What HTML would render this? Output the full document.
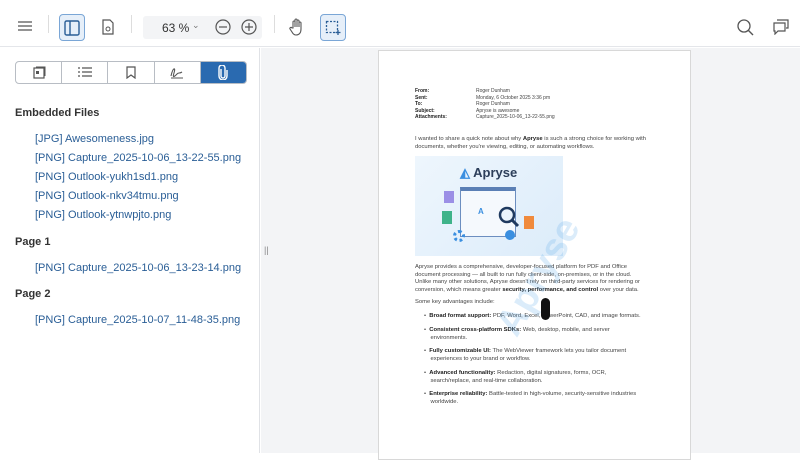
<!DOCTYPE html>
<html><head><style>
*{margin:0;padding:0;box-sizing:border-box}
body{width:800px;height:453px;overflow:hidden;background:#fff;font-family:"Liberation Sans",sans-serif;position:relative}
.tb{position:absolute;left:0;top:0;width:800px;height:47px;border-bottom:1px solid #e4e6ea;background:#fff}
.ic{position:absolute}
.side{position:absolute;left:0;top:48px;width:260px;height:405px;border-right:1px solid #e0e2e6;background:#fff}
.main{position:absolute;left:261px;top:48px;width:539px;height:405px;background:#f3f4f6}
.page{position:absolute;left:378px;top:50px;width:313px;height:410px;background:#fff;border:1px solid #d8d8d8}
.tabs{position:absolute;left:15px;top:61px;width:232px;height:23px;border:1px solid #b8bdc4;border-radius:4px;display:flex;overflow:hidden}
.tabs div{flex:1;border-right:1px solid #b8bdc4;display:flex;align-items:center;justify-content:center}
.tabs div:last-child{border:none;background:#2a6ab0}
h4{position:absolute;left:15px;font-size:11px;font-weight:bold;color:#333}
.lk{position:absolute;left:35px;font-size:11px;color:#2a5e96}
.p{position:absolute;font-size:5.85px;color:#444;line-height:6.6px;white-space:nowrap}
.q{line-height:7.6px}
b{color:#222}
</style></head><body>
<div class="tb">
 <svg class="ic" style="left:18px;top:21px" width="14" height="10"><path d="M0 1h14M0 5h14M0 9h14" stroke="#555" stroke-width="1.3"/></svg>
 <div class="ic" style="left:48px;top:15px;width:1px;height:18px;background:#ddd"></div>
 <div class="ic" style="left:59px;top:14px;width:26px;height:27px;border:1px solid #7aa6d6;border-radius:4px;background:#e6eff9"></div>
 <svg class="ic" style="left:64px;top:20px" width="16" height="16"><rect x="1" y="1" width="14" height="14" rx="1.5" fill="none" stroke="#2a5e96" stroke-width="1.4"/><path d="M6 1v14" stroke="#2a5e96" stroke-width="1.4"/></svg>
 <svg class="ic" style="left:102px;top:19px" width="12" height="16"><path d="M1 1h7l3 3v11H1z" fill="none" stroke="#555" stroke-width="1.2"/><circle cx="6" cy="10" r="2" fill="none" stroke="#555"/></svg>
 <div class="ic" style="left:131px;top:15px;width:1px;height:18px;background:#ddd"></div>
 <div class="ic" style="left:143px;top:16px;width:119px;height:23px;background:#f3f4f6;border-radius:3px"></div>
 <div class="ic" style="left:162px;top:21px;font-size:12px;color:#333">63 %</div>
 <div class="ic" style="left:192px;top:20px;font-size:9px;color:#777">⌄</div>
 <svg class="ic" style="left:215px;top:19px" width="16" height="16"><circle cx="8" cy="8" r="7" fill="none" stroke="#555" stroke-width="1.2"/><path d="M4 8h8" stroke="#555" stroke-width="1.2"/></svg>
 <svg class="ic" style="left:241px;top:19px" width="16" height="16"><circle cx="8" cy="8" r="7" fill="none" stroke="#555" stroke-width="1.2"/><path d="M4 8h8M8 4v8" stroke="#555" stroke-width="1.2"/></svg>
 <div class="ic" style="left:274px;top:15px;width:1px;height:18px;background:#ddd"></div>
 <svg class="ic" style="left:289px;top:18px" width="16" height="18"><path d="M4 10V4a1 1 0 0 1 2 0v5V2a1 1 0 0 1 2 0v7V3a1 1 0 0 1 2 0v6V5a1 1 0 0 1 2 0v6c0 4-2 6-5 6-2 0-3-1-4-3l-2-3a1 1 0 0 1 2-1z" fill="none" stroke="#555" stroke-width="1.1"/></svg>
 <div class="ic" style="left:320px;top:14px;width:26px;height:27px;border:1px solid #7aa6d6;border-radius:4px;background:#e6eff9"></div>
 <svg class="ic" style="left:325px;top:20px" width="16" height="16"><rect x="1.5" y="1.5" width="11" height="11" fill="none" stroke="#2a5e96" stroke-width="1.3" stroke-dasharray="2 1.5"/><path d="M13 10v5M10.5 12.5h5" stroke="#2a5e96" stroke-width="1.3"/></svg>
 <svg class="ic" style="left:737px;top:19px" width="18" height="18"><circle cx="7" cy="7" r="6" fill="none" stroke="#555" stroke-width="1.3"/><path d="M11 11l5 5" stroke="#555" stroke-width="1.4"/></svg>
 <svg class="ic" style="left:773px;top:19px" width="16" height="16"><path d="M4 1h11v8h-2M1 4h11v8H5l-3 3v-3H1z" fill="none" stroke="#555" stroke-width="1.2"/></svg>
</div>
<div class="side"></div>
<div class="tabs">
 <div><svg width="14" height="14"><rect x="2" y="2" width="10" height="10" fill="none" stroke="#555" stroke-width="1.2"/><rect x="4" y="5" width="3" height="3" fill="#555"/><path d="M4 1h9v9" fill="none" stroke="#555"/></svg></div>
 <div><svg width="14" height="11"><path d="M0 1h2M4 1h10M0 5h2M4 5h10M0 9h2M4 9h10" stroke="#555" stroke-width="1.2"/></svg></div>
 <div><svg width="10" height="13"><path d="M1 1h8v11L5 9 1 12z" fill="none" stroke="#555" stroke-width="1.2"/></svg></div>
 <div><svg width="14" height="13"><path d="M1 10c2-9 5-9 3-3s1 3 3 1 2 0 5-2M1 12h12" fill="none" stroke="#555" stroke-width="1.1"/></svg></div>
 <div><svg width="10" height="15"><path d="M3 4v7a2 2 0 0 0 4 0V3a3 3 0 0 0-6 0v8a4 4 0 0 0 8 0V5" fill="none" stroke="#fff" stroke-width="1.4"/></svg></div>
</div>
<h4 style="top:107px">Embedded Files</h4>
<div class="lk" style="top:133px">[JPG] Awesomeness.jpg</div>
<div class="lk" style="top:152px">[PNG] Capture_2025-10-06_13-22-55.png</div>
<div class="lk" style="top:171px">[PNG] Outlook-yukh1sd1.png</div>
<div class="lk" style="top:190px">[PNG] Outlook-nkv34tmu.png</div>
<div class="lk" style="top:209px">[PNG] Outlook-ytnwpjto.png</div>
<h4 style="top:236px">Page 1</h4>
<div class="lk" style="top:262px">[PNG] Capture_2025-10-06_13-23-14.png</div>
<h4 style="top:288px">Page 2</h4>
<div class="lk" style="top:314px">[PNG] Capture_2025-10-07_11-48-35.png</div>
<div class="main"><div style="position:absolute;left:3px;top:197px;font-size:9px;color:#888">||</div></div>
<div class="page"></div>
<div class="p" style="left:415px;top:88px;font-weight:bold;color:#222;font-size:5px">From:<br>Sent:<br>To:<br>Subject:<br>Attachments:</div>
<div class="p" style="left:476px;top:88px;font-size:5px">Roger Dunham<br>Monday, 6 October 2025 3:36 pm<br>Roger Dunham<br>Apryse is awesome<br>Capture_2025-10-06_13-22-55.png</div>
<div class="p q" style="left:415px;top:136px">I wanted to share a quick note about why <b>Apryse</b> is such a strong choice for working with<br>documents, whether you're viewing, editing, or automating workflows.</div>
<div style="position:absolute;left:415px;top:156px;width:148px;height:100px;background:linear-gradient(135deg,#eef6fd,#dcecfa)"></div>
<div style="position:absolute;left:460px;top:165px;font-size:13px;font-weight:bold;color:#2c3e5a"><span style="color:#3b8fe0">◭</span> Apryse</div>
<div style="position:absolute;left:460px;top:187px;width:56px;height:50px;background:#f5f9fd;border:1px solid #6c8ec0;border-top:4px solid #5a7fb5"></div>
<div style="position:absolute;left:478px;top:207px;font-size:8px;color:#3b8fe0;font-weight:bold">A</div>
<svg style="position:absolute;left:496px;top:204px" width="26" height="26"><circle cx="11" cy="11" r="7" fill="#eaf3fb" stroke="#1f3a5f" stroke-width="2.5"/><path d="M16 16l6 6" stroke="#1f3a5f" stroke-width="3"/></svg>
<div style="position:absolute;left:444px;top:191px;width:10px;height:12px;background:#9b8fe6"></div>
<div style="position:absolute;left:442px;top:211px;width:10px;height:13px;background:#3fb38a"></div>
<div style="position:absolute;left:524px;top:216px;width:10px;height:13px;background:#f08a3c"></div>
<div style="position:absolute;left:453px;top:230px;width:12px;height:12px;border-radius:50%;border:3px dotted #3b8fe0"></div>
<div style="position:absolute;left:505px;top:230px;width:10px;height:10px;border-radius:50%;background:#3b8fe0"></div>
<div class="p q" style="left:415px;top:264px">Apryse provides a comprehensive, developer-focused platform for PDF and Office<br>document processing — all built to run fully client-side, on-premises, or in the cloud.<br>Unlike many other solutions, Apryse doesn't rely on third-party services for rendering or<br>conversion, which means greater <b>security, performance, and control</b> over your data.</div>
<div class="p" style="left:415px;top:299px">Some key advantages include:</div>
<div class="p q" style="left:424px;top:313px">•&nbsp; <b>Broad format support:</b> PDF, Word, Excel, PowerPoint, CAD, and image formats.</div>
<div class="p q" style="left:424px;top:327px">•&nbsp; <b>Consistent cross-platform SDKs:</b> Web, desktop, mobile, and server<br>&nbsp;&nbsp;&nbsp;&nbsp;environments.</div>
<div class="p q" style="left:424px;top:348px">•&nbsp; <b>Fully customizable UI:</b> The WebViewer framework lets you tailor document<br>&nbsp;&nbsp;&nbsp;&nbsp;experiences to your brand or workflow.</div>
<div class="p q" style="left:424px;top:370px">•&nbsp; <b>Advanced functionality:</b> Redaction, digital signatures, forms, OCR,<br>&nbsp;&nbsp;&nbsp;&nbsp;search/replace, and real-time collaboration.</div>
<div class="p q" style="left:424px;top:391px">•&nbsp; <b>Enterprise reliability:</b> Battle-tested in high-volume, security-sensitive industries<br>&nbsp;&nbsp;&nbsp;&nbsp;worldwide.</div>
<div style="position:absolute;left:488px;top:322px;font-size:38px;font-weight:bold;color:rgba(90,170,230,0.22);transform:rotate(-60deg);transform-origin:left top">Apryse</div>
<div style="position:absolute;left:541px;top:298px;width:9px;height:22px;border-radius:5px;background:#111"></div>
</body></html>
